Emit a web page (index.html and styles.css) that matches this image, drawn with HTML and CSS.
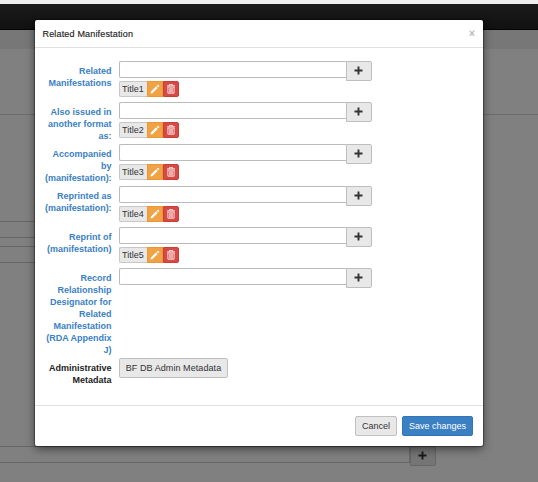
FILE: index.html
```
<!DOCTYPE html>
<html lang="en">
<head>
<meta charset="utf-8">
<title>Related Manifestation</title>
<link rel="stylesheet" href="styles.css">
</head>
<body>
<svg class="defs" width="0" height="0">
  <symbol id="pencil" viewBox="0 0 10 10"><path d="M0.5 9.5 1 7.4 6.1 2.3 7.7 3.9 2.6 9ZM6.7 1.7 7.5.9Q7.9.6 8.3.9L9.1 1.7Q9.4 2.1 9.1 2.5L8.3 3.3Z" fill="currentColor"/></symbol>
  <symbol id="trash" viewBox="0 0 10 10"><path d="M1 1.8H9M3.5 1.6V.4H6.5V1.6M1.9 3V9.2H8.1V3M1.5 3H8.5M3.8 3.8V8.6M5 3.8V8.6M6.2 3.8V8.6" fill="none" stroke="currentColor" stroke-width=".8"/></symbol>
  <symbol id="plus" viewBox="0 0 9 9"><path d="M4.5.5V8.5M.5 4.5H8.5" fill="none" stroke="currentColor" stroke-width="1.9"/></symbol>
</svg>
<div class="page">
  <div class="strip"></div>
  <div class="navbar"></div>
  <div class="band"></div>
  <div class="page-head"></div>
  <div class="page-field first"></div>
  <div class="page-field second"></div>
  <div class="page-group"><div class="page-field wide"></div><div class="page-add"><svg class="plus"><use href="#plus"/></svg></div></div>
</div>
<div class="modal">
  <div class="modal-header"><span>Related Manifestation</span><span class="close">×</span></div>
  <div class="modal-body">
    <div class="row"><div class="label">Related<br>Manifestations</div><div class="field"><div class="group"><div class="input"></div><div class="add"><svg class="plus"><use href="#plus"/></svg></div></div><div class="tag"><span class="name">Title1</span><span class="edit"><svg><use href="#pencil"/></svg></span><span class="del"><svg><use href="#trash"/></svg></span></div></div></div>
    <div class="row tall"><div class="label">Also issued in<br>another format<br>as:</div><div class="field"><div class="group"><div class="input"></div><div class="add"><svg class="plus"><use href="#plus"/></svg></div></div><div class="tag"><span class="name">Title2</span><span class="edit"><svg><use href="#pencil"/></svg></span><span class="del"><svg><use href="#trash"/></svg></span></div></div></div>
    <div class="row tall"><div class="label">Accompanied<br>by<br><span class="tight">(manifestation):</span></div><div class="field"><div class="group"><div class="input"></div><div class="add"><svg class="plus"><use href="#plus"/></svg></div></div><div class="tag"><span class="name">Title3</span><span class="edit"><svg><use href="#pencil"/></svg></span><span class="del"><svg><use href="#trash"/></svg></span></div></div></div>
    <div class="row"><div class="label">Reprinted as<br><span class="tight">(manifestation):</span></div><div class="field"><div class="group"><div class="input"></div><div class="add"><svg class="plus"><use href="#plus"/></svg></div></div><div class="tag"><span class="name">Title4</span><span class="edit"><svg><use href="#pencil"/></svg></span><span class="del"><svg><use href="#trash"/></svg></span></div></div></div>
    <div class="row"><div class="label">Reprint of<br>(manifestation)</div><div class="field"><div class="group"><div class="input"></div><div class="add"><svg class="plus"><use href="#plus"/></svg></div></div><div class="tag"><span class="name">Title5</span><span class="edit"><svg><use href="#pencil"/></svg></span><span class="del"><svg><use href="#trash"/></svg></span></div></div></div>
    <div class="row designator"><div class="label">Record<br>Relationship<br>Designator for<br>Related<br>Manifestation<br>(RDA Appendix<br>J)</div><div class="field"><div class="group"><div class="input"></div><div class="add"><svg class="plus"><use href="#plus"/></svg></div></div></div></div>
    <div class="row"><div class="label dark">Administrative<br>Metadata</div><div class="field"><div class="btn admin">BF DB Admin Metadata</div></div></div>
  </div>
  <div class="modal-footer"><div class="btn cancel">Cancel</div><div class="btn save">Save changes</div></div>
</div>
</body>
</html>
```
FILE: styles.css
```
* { box-sizing: border-box; }
body { margin: 0; width: 538px; height: 482px; overflow: hidden; background: #808080; font: 9px/12px "Liberation Sans", Arial, sans-serif; color: #333; }
svg { display: block; }
.defs { position: absolute; }
.strip { height: 4px; background: #eee; }
.navbar { height: 26px; background: linear-gradient(#1b1b1b, #111); border-bottom: 1px solid #040404; }
.band { height: 19px; background: #777; }
.page-head { height: 66px; border-bottom: 1px solid #6c6c6c; }
.page-field { width: 200px; height: 17px; border: 1px solid #666; border-left: 0; }
.first { margin-top: 106px; }
.second { margin-top: 8px; }
.page-group { display: flex; margin-top: 183px; }
.wide { width: 410px; }
.page-add { width: 26px; height: 20px; border: 1px solid #666; border-radius: 0 2px 2px 0; background: #757575; color: #1a1a1a; display: flex; align-items: center; justify-content: center; padding: 0 1px 2px 0; }
.plus { width: 9px; height: 9px; }
.modal { position: absolute; left: 35px; top: 20px; width: 448px; height: 426px; background: #fff; border-radius: 2px; box-shadow: 0 0 1px 1px rgba(0,0,0,.35), 0 3px 10px rgba(0,0,0,.5); display: flex; flex-direction: column; }
.modal-header { height: 28px; border-bottom: 1px solid #e0e0e0; padding: 0 8px 0 7.5px; display: flex; align-items: center; justify-content: space-between; letter-spacing: .17px; color: #222; -webkit-text-stroke: .15px; }
.close { font-size: 10px; font-weight: bold; color: #bbb; }
.modal-body { height: 357px; padding-top: 13px; }
.row { display: grid; grid-template-columns: 76.5px 1fr; column-gap: 7.5px; height: 41px; }
.tall { height: 42px; }
.designator { height: 90px; }
.label { padding-top: 4px; text-align: right; font-weight: bold; color: #3a80c4; white-space: nowrap; }
.tight { letter-spacing: -.07px; }
.dark { color: #222; }
.group { display: flex; height: 20px; }
.input { width: 227px; height: 17px; border: 1px solid #bbb; border-right: 0; border-radius: 2px 0 0 2px; background: #fff; }
.add { width: 26px; height: 20px; border: 1px solid #bebebe; border-radius: 0 2px 2px 0; background: #e8e8e8; display: flex; align-items: center; justify-content: center; padding: 0 1px 2px 0; }
.tag { display: flex; width: 60px; height: 16px; line-height: 14px; }
.name { width: 28px; border: 1px solid #c8c8c8; border-right: 0; border-radius: 2px 0 0 2px; background: #e8e8e8; padding-left: 2px; }
.edit, .del { width: 16px; color: #fff; display: flex; align-items: center; justify-content: center; }
.edit { background: #f0a345; border: 1px solid #eb9833; }
.del { background: #d64a46; border: 1px solid #d03c37; border-radius: 0 2px 2px 0; }
.tag svg { width: 10px; height: 10px; flex: none; }
.btn { height: 20px; border: 1px solid #c0c0c0; border-radius: 2px; background: #e8e8e8; display: flex; align-items: center; justify-content: center; white-space: nowrap; }
.admin { width: 109px; letter-spacing: .07px; }
.modal-footer { flex: 1; border-top: 1px solid #e0e0e0; padding: 10px 10px 0 0; display: flex; justify-content: flex-end; gap: 5px; }
.cancel { width: 42px; }
.save { width: 71px; background: #3b80c3; border-color: #3276b5; color: #fff; }
```
